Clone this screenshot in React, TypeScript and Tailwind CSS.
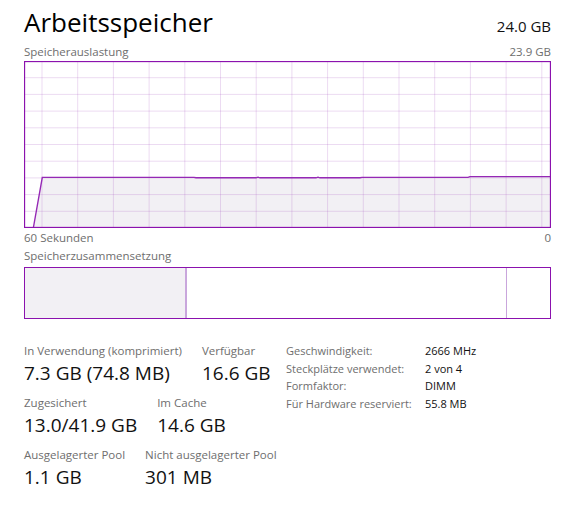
import React from 'react'

const W = 527
const H = 167

const hLines = Array.from({ length: 9 }, (_, i) => (i + 1) * 16.7)
const vLines = Array.from({ length: 15 }, (_, i) => 18 + i * 35.7)

const usage =
  'M9.5 166 L18.3 116.4 L170 116.4 L172 116.8 L232 116.8 L234 116.2 L236 116.8 L292 116.8 L294 116.2 L296 116.8 L336 116.8 L338 116.4 L444 116.4 L446 115.6 L527 115.6'

function UsageChart() {
  return (
    <svg width={W} height={H} viewBox={`0 0 ${W} ${H}`} className="block">
      <rect x="0" y="0" width={W} height={H} fill="#ffffff" />
      <path d={`${usage} L527 167 L9.5 167 Z`} fill="#f2f0f4" />
      {hLines.map((y) => (
        <line key={`h${y}`} x1="0" x2={W} y1={y} y2={y} stroke="#a24bc0" strokeOpacity="0.2" strokeWidth="1" />
      ))}
      {vLines.map((x) => (
        <line key={`v${x}`} x1={x} x2={x} y1="0" y2={H} stroke="#a24bc0" strokeOpacity="0.2" strokeWidth="1" />
      ))}
      <path d={usage} fill="none" stroke="#9528b5" strokeWidth="1.4" />
      <rect x="0.5" y="0.5" width={W - 1} height={H - 1} fill="none" stroke="#8b12ae" strokeWidth="1.3" />
    </svg>
  )
}

function Stat({ label, value }: { label: string; value: string }) {
  return (
    <div className="flex flex-col">
      <span className="text-[11.5px] leading-[16px] text-[#6e6e6e] whitespace-nowrap">{label}</span>
      <span className="text-[19px] leading-[28px] text-[#111] whitespace-nowrap">{value}</span>
    </div>
  )
}

const specs = [
  ['Geschwindigkeit:', '2666 MHz'],
  ['Steckplätze verwendet:', '2 von 4'],
  ['Formfaktor:', 'DIMM'],
  ['Für Hardware reserviert:', '55.8 MB'],
]

export default function App() {
  return (
    <div className="w-[566px] h-[509px] bg-white pl-6 pr-[15px] font-['Segoe_UI','Open_Sans',sans-serif] overflow-hidden">
      <div className="flex items-baseline justify-between pt-[4px]">
        <h1 className="text-[26px] leading-[36px] text-black">Arbeitsspeicher</h1>
        <span className="text-[15px] text-[#111]">24.0 GB</span>
      </div>

      <div className="flex justify-between text-[11.5px] leading-[15px] text-[#6e6e6e] mt-[4px]">
        <span>Speicherauslastung</span>
        <span>23.9 GB</span>
      </div>
      <div className="mt-[2px]">
        <UsageChart />
      </div>
      <div className="flex justify-between text-[11.5px] leading-[15px] text-[#6e6e6e] mt-[2px]">
        <span>60 Sekunden</span>
        <span>0</span>
      </div>
      <div className="text-[11.5px] leading-[15px] text-[#6e6e6e] mt-[3px]">Speicherzusammensetzung</div>

      <div className="mt-[4px] flex h-[52px] w-[527px] border border-[#8b12ae]">
        <div className="w-[162px] bg-[#f2f0f4] border-r-2 border-[#c9a6dc]" />
        <div className="flex-1 border-r border-[#c9a6dc]" />
        <div className="w-[43px]" />
      </div>

      <div className="flex items-start mt-[24px]">
        <div className="flex flex-col gap-[8px] w-[262px]">
          <div className="flex gap-5">
            <Stat label="In Verwendung (komprimiert)" value="7.3 GB (74.8 MB)" />
            <Stat label="Verfügbar" value="16.6 GB" />
          </div>
          <div className="flex gap-5">
            <Stat label="Zugesichert" value="13.0/41.9 GB" />
            <Stat label="Im Cache" value="14.6 GB" />
          </div>
          <div className="flex gap-5">
            <Stat label="Ausgelagerter Pool" value="1.1 GB" />
            <Stat label="Nicht ausgelagerter Pool" value="301 MB" />
          </div>
        </div>
        <div className="grid grid-cols-[139px_auto] text-[11px] leading-[17.7px] -mt-[1px]">
          {specs.map(([k, v]) => (
            <React.Fragment key={k}>
              <span className="text-[#6e6e6e] whitespace-nowrap">{k}</span>
              <span className="text-[#111] whitespace-nowrap">{v}</span>
            </React.Fragment>
          ))}
        </div>
      </div>
    </div>
  )
}
